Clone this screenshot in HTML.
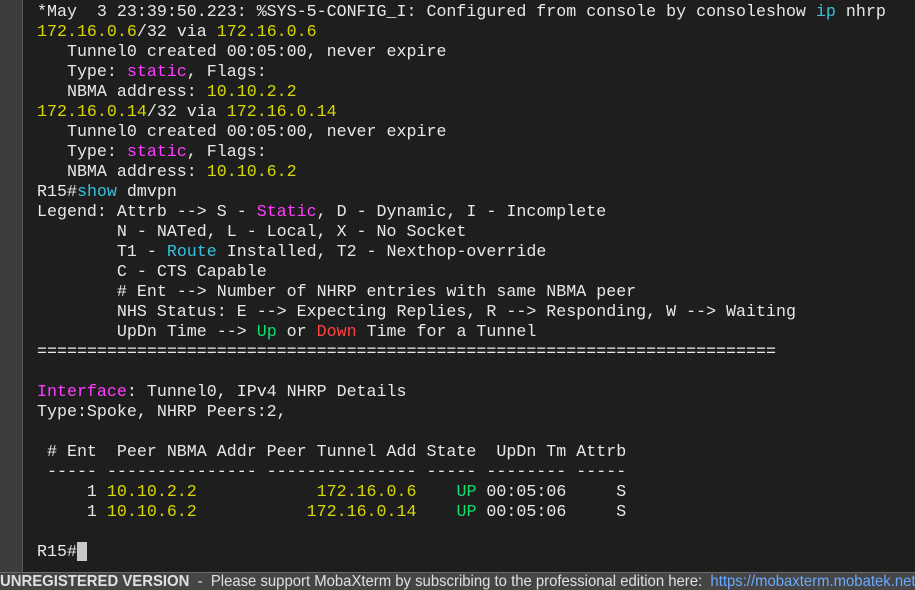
<!DOCTYPE html><html><head><style>
body{margin:0;width:915px;height:589px;background:#1e1e1e;overflow:hidden;position:relative}
#l{position:absolute;left:0;top:0;width:22px;height:572px;background:#3c3c3c;border-right:1px solid #5a5a5a}
pre{position:absolute;left:37px;top:2px;margin:0;font-family:"Liberation Mono",monospace;font-size:16.65px;line-height:20px;color:#e8e8e8}
.y{color:#d8d800}.m{color:#ff3cff}.c{color:#38c0dc}.g{color:#10e070}.r{color:#ff4040}
.cur{background:#c8c8c8;color:#c8c8c8}
#sb{position:absolute;left:0;top:572px;width:915px;height:17px;background:#454545;border-top:1px solid #6a6a6a;overflow:hidden}
#s{position:absolute;left:0;top:-1px;width:1100px;font-family:"Liberation Sans",sans-serif;font-size:16px;line-height:19px;color:#e0e0e0;white-space:nowrap;transform:scaleX(.93);transform-origin:left}
</style></head><body><div id="l"></div>
<pre>*May  3 23:39:50.223: %SYS-5-CONFIG_I: Configured from console by consoleshow <span class="c">ip</span> nhrp
<span class="y">172.16.0.6</span>/32 via <span class="y">172.16.0.6</span>
   Tunnel0 created 00:05:00, never expire
   Type: <span class="m">static</span>, Flags:
   NBMA address: <span class="y">10.10.2.2</span>
<span class="y">172.16.0.14</span>/32 via <span class="y">172.16.0.14</span>
   Tunnel0 created 00:05:00, never expire
   Type: <span class="m">static</span>, Flags:
   NBMA address: <span class="y">10.10.6.2</span>
R15#<span class="c">show</span> dmvpn
Legend: Attrb --> S - <span class="m">Static</span>, D - Dynamic, I - Incomplete
        N - NATed, L - Local, X - No Socket
        T1 - <span class="c">Route</span> Installed, T2 - Nexthop-override
        C - CTS Capable
        # Ent --> Number of NHRP entries with same NBMA peer
        NHS Status: E --> Expecting Replies, R --> Responding, W --> Waiting
        UpDn Time --> <span class="g">Up</span> or <span class="r">Down</span> Time for a Tunnel
==========================================================================

<span class="m">Interface</span>: Tunnel0, IPv4 NHRP Details
Type:Spoke, NHRP Peers:2,

 # Ent  Peer NBMA Addr Peer Tunnel Add State  UpDn Tm Attrb
 ----- --------------- --------------- ----- -------- -----
     1 <span class="y">10.10.2.2</span>            <span class="y">172.16.0.6</span>    <span class="g">UP</span> 00:05:06     S
     1 <span class="y">10.10.6.2</span>           <span class="y">172.16.0.14</span>    <span class="g">UP</span> 00:05:06     S

R15#<span class="cur">_</span></pre>
<div id="sb"><div id="s"><b>UNREGISTERED VERSION</b> &nbsp;- &nbsp;Please support MobaXterm by subscribing to the professional edition here: &nbsp;<span style="color:#6aaaff">https://mobaxterm.mobatek.net</span></div></div>
</body></html>
